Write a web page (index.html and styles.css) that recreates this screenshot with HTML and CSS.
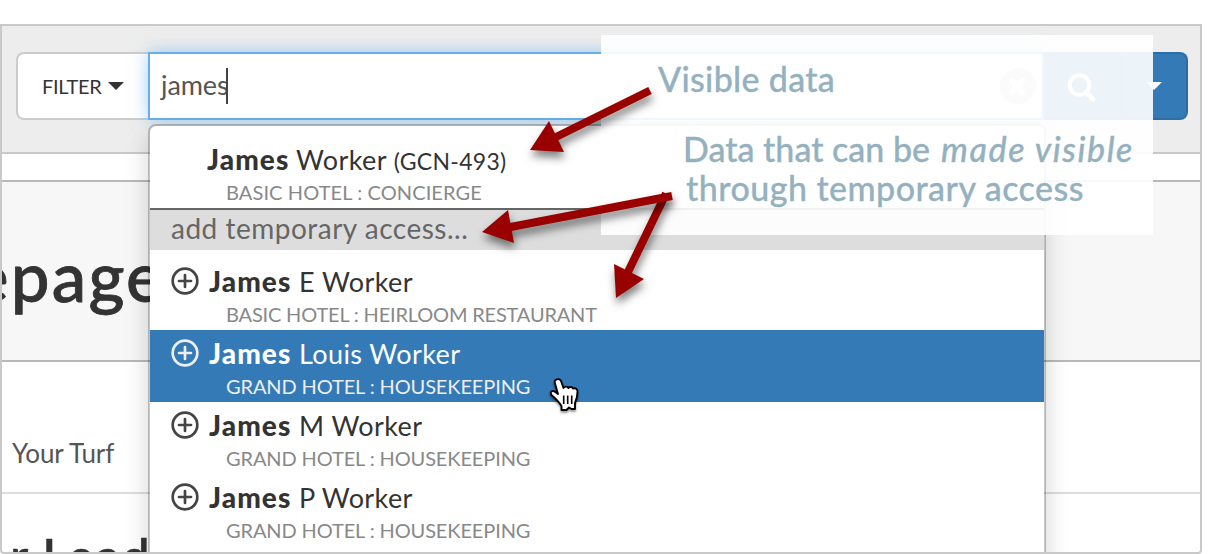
FILE: index.html
```html
<!DOCTYPE html>
<html lang="en">
<head>
<meta charset="utf-8">
<title>Employee search</title>
<link rel="stylesheet" href="styles.css">
</head>
<body>
<div class="frame">
  <header class="toolbar">
    <div class="filter"><span class="filter-label">FILTER</span><i class="caret"></i></div>
    <div class="search"><span class="query">james</span><i class="cursor-bar"></i>
      <svg class="clear" viewBox="0 0 36 36"><circle cx="18" cy="18" r="18" fill="#ccc"/><path d="M12 13 22 24M22 13 12 24" stroke="#fff" stroke-width="6" stroke-linecap="round"/></svg>
    </div>
    <div class="go"><svg viewBox="0 0 30 30"><circle cx="12.500" cy="12" r="9.800" fill="none" stroke="#fff" stroke-width="4"/><path d="M19.500 19.500 26 26" stroke="#fff" stroke-width="5" stroke-linecap="round"/></svg></div>
    <div class="more"><i class="caret light"></i></div>
  </header>
  <div class="strip"></div>
  <section class="hero"><h1>epage</h1></section>
  <section class="turf">Your Turf</section>
  <section class="lead"><h2>r Lead</h2></section>

  <div class="menu">
    <div class="item plain">
      <div class="name"><b>James</b><span class="rest">Worker <small>(GCN-493)</small></span></div>
      <div class="sub concierge">BASIC HOTEL : CONCIERGE</div>
    </div>
    <div class="divider"><span>add temporary access...</span></div>
    <div class="item">
      <div class="name"><svg class="plus" viewBox="0 0 28 28"><circle cx="14" cy="14" r="12.300"/><path d="M14 8v12M8 14h12"/></svg><b>James</b><span class="rest">E Worker</span></div>
      <div class="sub heirloom">BASIC HOTEL : HEIRLOOM RESTAURANT</div>
    </div>
    <div class="item active">
      <div class="name"><svg class="plus" viewBox="0 0 28 28"><circle cx="14" cy="14" r="12.300"/><path d="M14 8v12M8 14h12"/></svg><b>James</b><span class="rest">Louis Worker</span></div>
      <div class="sub">GRAND HOTEL : HOUSEKEEPING</div>
    </div>
    <div class="item">
      <div class="name"><svg class="plus" viewBox="0 0 28 28"><circle cx="14" cy="14" r="12.300"/><path d="M14 8v12M8 14h12"/></svg><b>James</b><span class="rest">M Worker</span></div>
      <div class="sub">GRAND HOTEL : HOUSEKEEPING</div>
    </div>
    <div class="item">
      <div class="name"><svg class="plus" viewBox="0 0 28 28"><circle cx="14" cy="14" r="12.300"/><path d="M14 8v12M8 14h12"/></svg><b>James</b><span class="rest">P Worker</span></div>
      <div class="sub">GRAND HOTEL : HOUSEKEEPING</div>
    </div>
  </div>
</div>

<div class="note">
  <p class="n1">Visible data</p>
  <p class="n2"><span>Data that can be</span> <em>made visible</em></p>
  <p class="n3">through temporary access</p>
</div>

<svg class="arrows" viewBox="0 0 1218 554">
  <g class="arrow"><path class="shaft" d="M650 90.500 553 138.500"/><path class="head" d="M530 150 549 121 564 152Z"/></g>
  <g class="arrow"><path class="shaft" d="M666 193.500 628 272"/><path class="head" d="M616 298 614 264 644 279Z"/></g>
  <g class="arrow"><path class="shaft" d="M672 196 508 227.500"/><path class="head" d="M482 232 508 210 514 243Z"/></g>
</svg>
<svg class="hand" viewBox="0 0 32 36"><path d="M8.500 2.500C10.500 1.500 12.500 2.500 13.200 4.500L15.500 11C17 9 19.800 9.300 20.300 11C22 9.300 24.500 9.800 25 11.500C27.500 10.500 29.500 12 29.500 14.500C29.500 20 28.500 23 27 26V32H23.500L21 30.500L18.500 33H13.500V29C11 25 8 22 4 18.500C1.500 16 3 13.500 5.500 14C7.500 14.500 8.500 15.500 10 17L7 6.500C6.300 4.500 7 3 8.500 2.500Z" fill="#fff" stroke="#000" stroke-width="1.900" stroke-linejoin="round"/><path d="M15.700 18.500v8.500M19.700 18.500v8.500M23.700 18.500v8.500" stroke="#000" stroke-width="1.600"/></svg>
</body>
</html>
```
FILE: styles.css
```css
* { box-sizing: border-box; }
body { margin: 0; width: 1218px; height: 554px; overflow: hidden; background: #fff; font-family: Lato, "Open Sans", sans-serif; color: #333; position: relative; padding-top: 24px; }
h1, h2, p { margin: 0; font-weight: 500; }
.frame { position: relative; width: 1202px; height: 530px; border: 2px solid #c9c9c9; border-radius: 0 0 4px 4px; overflow: hidden; background: #fff; }
.toolbar { height: 128px; background: #ededed; border-bottom: 2px solid #c9c9c9; padding: 26px 12px 0 14px; display: flex; }
.filter { width: 132px; height: 68px; background: #fff; border: 2px solid #ccc; border-right: 0; border-radius: 8px 0 0 8px; display: flex; align-items: center; padding-left: 24px; font-size: 20px; letter-spacing: -.3px; }
.filter-label { width: 66px; white-space: nowrap; }
.caret { width: 0; height: 0; border: 8px solid transparent; border-top-color: #333; border-bottom: 0; }
.caret.light { border-top-color: #fff; }
.search { position: relative; width: 896px; height: 68px; background: #fff; border: 2px solid #66afe9; box-shadow: 0 0 16px rgba(102,175,233,.6); display: flex; align-items: center; padding: 0 6px 0 11px; }
.query { width: 65px; font-size: 27px; color: #555; white-space: nowrap; letter-spacing: -.1px; padding-bottom: 4px; }
.cursor-bar { width: 2px; height: 36px; background: #444; }
.clear { width: 36px; height: 36px; margin-left: auto; }
.go, .more { height: 68px; background: #337ab7; border: 2px solid #2e6da4; display: flex; align-items: center; }
.go { width: 78px; border-left: 0; padding-left: 23px; }
.go svg { width: 30px; height: 30px; margin-top: 3px; }
.more { width: 66px; border-left: 0; border-radius: 0 8px 8px 0; padding-left: 24px; }
.strip { height: 26px; }
.hero { height: 182px; background: #f7f7f7; border: solid #b9b9b9; border-width: 2px 0; overflow: hidden; }
.hero h1 { font-size: 69px; line-height: 80px; margin: 54px 0 0 -30px; letter-spacing: 2.2px; -webkit-text-stroke: .8px #333; }
.turf { height: 132px; border-bottom: 2px solid #ddd; padding: 73px 0 0 10px; font-size: 26px; line-height: 36px; color: #555; letter-spacing: -.1px; }
.lead { padding: 32px 0 0 8px; }
.lead h2 { font-size: 50px; line-height: 60px; white-space: nowrap; -webkit-text-stroke: .6px #333; letter-spacing: 1.2px; }
.menu { position: absolute; left: 146px; top: 98px; width: 898px; height: 460px; padding-top: 10px; background: #fff; background-clip: padding-box; border: 2px solid rgba(0,0,0,.22); border-radius: 8px; box-shadow: 0 12px 24px rgba(0,0,0,.175); }
.item { height: 72px; padding: 8px 0 0 21px; white-space: nowrap; }
.plain { padding-left: 57px; }
.name { display: flex; align-items: center; height: 34px; font-size: 27px; }
.name b { width: 90px; font-size: 28px; font-weight: 900; letter-spacing: 1.1px; padding-bottom: 4px; }
.rest { padding-bottom: 4px; letter-spacing: .4px; }
.plain b { width: 89px; }
.name small { font-size: 23px; letter-spacing: .3px; }
.plus { width: 28px; height: 28px; margin: 0 10px 4px 0; fill: none; stroke: #444; stroke-width: 2.700; stroke-linecap: round; }
.sub { font-size: 20px; line-height: 28px; color: #888; margin-left: 55px; letter-spacing: -.12px; }
.concierge { letter-spacing: .1px; }
.heirloom { letter-spacing: -.18px; }
.plain .sub { margin-left: 19px; }
.divider { height: 42px; background: #ddd; border-top: 2px solid #666; padding-left: 21px; margin-bottom: 8px; font-size: 28px; letter-spacing: .5px; line-height: 36px; color: #666; }
.active { background: #337ab7; color: #fff; }
.active .plus { stroke: #eee; }
.active .sub { color: #eee; }
.note { position: absolute; left: 601px; top: 35px; width: 552px; height: 200px; padding: 24px 0 0 57px; background: rgba(255,255,255,.91); color: #94b1c0; font-size: 34px; white-space: nowrap; }
.note p { line-height: 40px; letter-spacing: .3px; -webkit-text-stroke: .3px #94b1c0; }
.note .n2 { margin: 30px 0 0 25px; display: flex; }
.n2 span { width: 258px; letter-spacing: 0; }
.n2 em { letter-spacing: 1.6px; }
.note .n3 { margin-left: 28px; line-height: 38px; letter-spacing: .45px; }
.arrows { position: absolute; left: 0; top: 0; width: 1218px; height: 554px; }
.arrow { filter: drop-shadow(1px 6px 4px rgba(0,0,0,.5)); }
.shaft { stroke: #990000; stroke-width: 8; }
.head { fill: #990000; }
.hand { position: absolute; left: 548px; top: 377px; width: 32px; height: 36px; filter: drop-shadow(0 2px 1px rgba(0,0,0,.4)); }
```
